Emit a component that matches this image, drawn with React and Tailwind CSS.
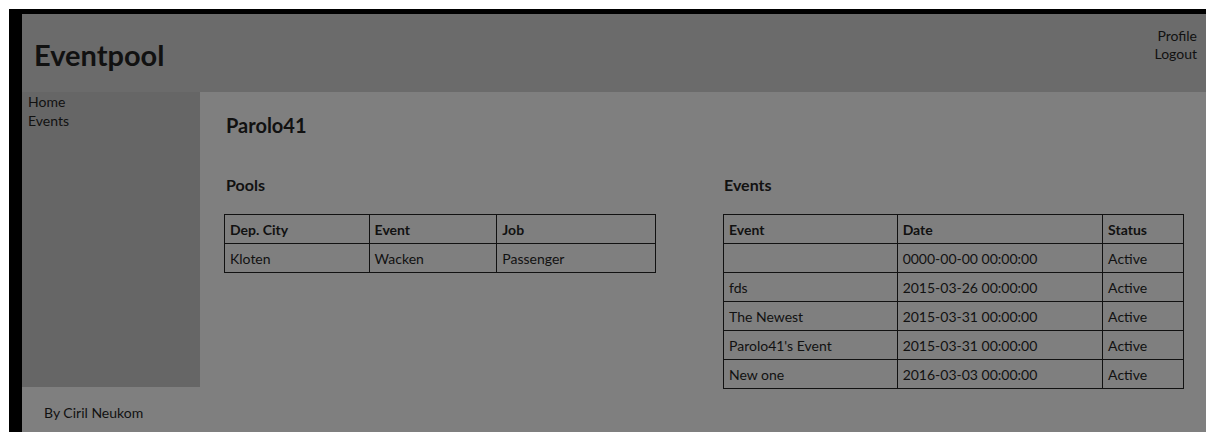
import React from "react";

const pools = [["Kloten", "Wacken", "Passenger"]];

const events = [
  ["", "0000-00-00 00:00:00", "Active"],
  ["fds", "2015-03-26 00:00:00", "Active"],
  ["The Newest", "2015-03-31 00:00:00", "Active"],
  ["Parolo41's Event", "2015-03-31 00:00:00", "Active"],
  ["New one", "2016-03-03 00:00:00", "Active"],
];

function DataTable({ head, rows, widths, className }) {
  return (
    <table className={"border-collapse border border-[#111] text-[14px] " + className}>
      <thead>
        <tr className="h-[29px]">
          {head.map((h, i) => (
            <th
              key={h}
              style={{ width: widths[i] }}
              className="border border-[#111] px-[5px] text-left font-bold"
            >
              {h}
            </th>
          ))}
        </tr>
      </thead>
      <tbody>
        {rows.map((r, ri) => (
          <tr key={ri} className="h-[29px]">
            {r.map((c, ci) => (
              <td key={ci} className="border border-[#111] px-[5px]">
                {c}
              </td>
            ))}
          </tr>
        ))}
      </tbody>
    </table>
  );
}

export default function App() {
  return (
    <div className="h-[432px] w-[1206px] overflow-hidden bg-white pl-[9px] pt-[9px] font-['Lato',sans-serif] text-[#111]">
      <div className="flex h-full flex-col bg-black pl-[13px] pt-[5px]">
        <header className="flex h-[78px] shrink-0 justify-between bg-[#6b6b6b] pl-[12px] pr-[9px]">
          <h1 className="mt-[26px] text-[29px] font-bold leading-none">Eventpool</h1>
          <nav className="mt-[13px] flex flex-col items-end text-[14px] leading-[18px]">
            <span>Profile</span>
            <span>Logout</span>
          </nav>
        </header>
        <div className="relative z-10 flex h-[295px] shrink-0">
          <aside className="w-[178px] shrink-0 bg-[#666666] pl-[6px] text-[14px] leading-[19px]">
            <div>Home</div>
            <div>Events</div>
          </aside>
          <main className="flex-1 bg-[#7f7f7f] pl-[24px] pt-[21px]">
            <h2 className="pl-[2px] text-[20px] font-bold leading-[24px]">Parolo41</h2>
            <div className="mt-[38px] flex">
              <section className="w-[499px] shrink-0">
                <h3 className="pl-[2px] text-[16px] font-bold leading-[20px]">Pools</h3>
                <DataTable
                  className="mt-[19px] w-[432px]"
                  head={["Dep. City", "Event", "Job"]}
                  rows={pools}
                  widths={[145, 128, 159]}
                />
              </section>
              <section>
                <h3 className="pl-[1px] text-[16px] font-bold leading-[20px]">Events</h3>
                <DataTable
                  className="mt-[19px] w-[461px]"
                  head={["Event", "Date", "Status"]}
                  rows={events}
                  widths={[174, 206, 81]}
                />
              </section>
            </div>
          </main>
        </div>
        <footer className="flex-1 bg-[#7f7f7f] pl-[22px] pt-[15px] text-[14px]">
          By Ciril Neukom
        </footer>
      </div>
    </div>
  );
}
